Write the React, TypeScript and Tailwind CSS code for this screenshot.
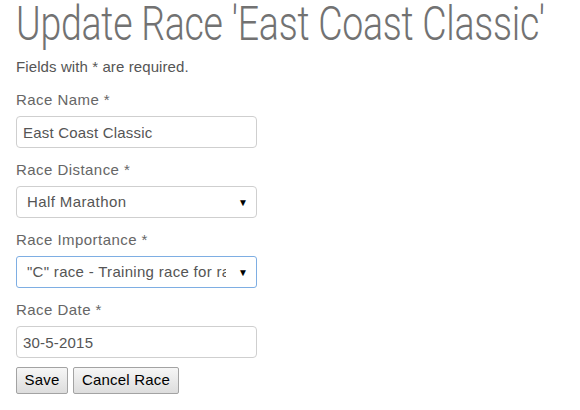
import React from "react";

const labelCls = "block text-[15px] leading-[20px] tracking-[0.45px] text-[#666] mb-[6px]";
const inputCls =
  "block w-[241px] h-[32px] px-[6px] border border-[#cfcfcf] rounded-[4px] bg-white text-[15px] tracking-[0.2px] text-[#555] outline-none";

export default function App() {
  return (
    <div className="w-[580px] h-[410px] bg-white overflow-hidden font-['Liberation_Sans',Arial,sans-serif] pl-[16px]">
      <div className="overflow-hidden w-[564px] h-[50px]">
        <h1 className="w-max whitespace-nowrap origin-left scale-x-[0.78] font-['Roboto',sans-serif] font-light text-[48px] leading-[48px] text-[#727272] tracking-[-0.3px]">
          Update Race 'East Coast Classic'
        </h1>
      </div>
      <p className="mt-[8px] text-[15px] leading-[18px] tracking-[0.1px] text-[#555]">Fields with * are required.</p>
      <form className="mt-[14px] flex flex-col gap-[12px]">
        <div className="flex flex-col">
          <label className={labelCls}>Race Name *</label>
          <input className={inputCls} defaultValue="East Coast Classic" />
        </div>
        <div className="flex flex-col">
          <label className={labelCls}>Race Distance *</label>
          <div className="relative w-[241px]">
            <select className={inputCls + " appearance-none pl-[10px] pr-[28px] tracking-[0.4px]"} defaultValue="half">
              <option value="half">Half Marathon</option>
            </select>
            <span className="absolute right-[9px] top-[9px] text-[10px] text-black pointer-events-none">▼</span>
          </div>
        </div>
        <div className="flex flex-col">
          <label className={labelCls}>Race Importance *</label>
          <div className="relative w-[241px]">
            <select
              className="block w-[241px] h-[32px] pl-[10px] pr-[30px] border border-[#7eaee3] rounded-[3px] bg-white text-[15px] tracking-[0.3px] text-[#555] outline-none appearance-none"
              defaultValue="c"
            >
              <option value="c">"C" race - Training race for races</option>
            </select>
            <span className="absolute right-[9px] top-[9px] text-[10px] text-black pointer-events-none">▼</span>
          </div>
        </div>
        <div className="flex flex-col">
          <label className={labelCls}>Race Date *</label>
          <input className={inputCls} defaultValue="30-5-2015" />
        </div>
        <div className="flex gap-[5px] -mt-[3px]">
          <button
            type="button"
            className="h-[27px] w-[52px] border border-[#a3a3a3] rounded-[2px] bg-gradient-to-b from-[#f6f6f6] to-[#dddddd] text-[15px] tracking-[0.2px] text-black"
          >
            Save
          </button>
          <button
            type="button"
            className="h-[27px] w-[106px] border border-[#a3a3a3] rounded-[2px] bg-gradient-to-b from-[#f6f6f6] to-[#dddddd] text-[15px] tracking-[0.2px] text-black"
          >
            Cancel Race
          </button>
        </div>
      </form>
    </div>
  );
}
